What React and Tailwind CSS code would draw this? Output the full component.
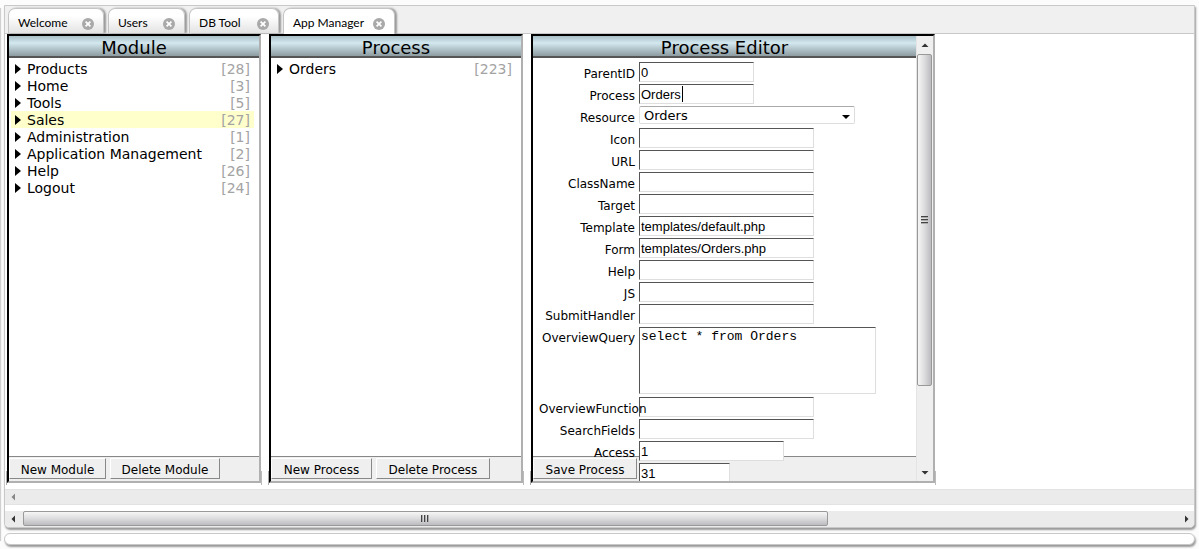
import React, { useState } from "react";

const tabs = [
  { name: "Welcome", width: "w-[96px]" },
  { name: "Users", width: "w-[77px]" },
  { name: "DB Tool", width: "w-[90px]" },
  { name: "App Manager", width: "w-[112px]" },
];

const modules = [
  ["Products", 28],
  ["Home", 3],
  ["Tools", 5],
  ["Sales", 27],
  ["Administration", 1],
  ["Application Management", 2],
  ["Help", 26],
  ["Logout", 24],
];

const textFields = [
  ["Icon", ""],
  ["URL", ""],
  ["ClassName", ""],
  ["Target", ""],
  ["Template", "templates/default.php"],
  ["Form", "templates/Orders.php"],
  ["Help", ""],
  ["JS", ""],
  ["SubmitHandler", ""],
];

const fieldStyle =
  "border border-t-[#555] border-l-[#555] border-r-[#dedede] border-b-[#dedede] bg-white outline-none font-['Liberation_Sans',sans-serif] text-[13px] text-black";

function CloseIcon() {
  return (
    <svg viewBox="0 0 12 12" className="size-3">
      <circle cx="6" cy="6" r="6" fill="#a9a9a9" />
      <path d="M3.6 3.6l4.8 4.8M8.4 3.6L3.6 8.4" stroke="#fff" strokeWidth="1.7" />
    </svg>
  );
}

function Tab({ name, width, selected, onSelect }) {
  return (
    <div
      className={`${width} flex items-start justify-between rounded-t-[7px] border border-b-0 border-[#c4c4c4] pr-[9px] pl-[9px] pt-1 shadow-[2px_0_2px_#999] ${
        selected ? "-mb-px bg-white" : "bg-linear-to-b from-white from-30% to-[#e3e3e3]"
      }`}
    >
      <button
        type="button"
        role="tab"
        aria-selected={selected}
        onClick={onSelect}
        className="font-[Lato,sans-serif] text-[12px] leading-5 whitespace-nowrap"
      >
        {name}
      </button>
      <button type="button" aria-label={`Close ${name}`} className="flex h-5 items-center pt-px">
        <CloseIcon />
      </button>
    </div>
  );
}

function Panel({ title, width, footer, scrollbar, children }) {
  return (
    <section className={`${width} relative flex shrink-0`}>
      <span className="absolute -bottom-[2px] -left-px h-[14px] w-px bg-[#aaa]" />
      <span className="absolute -right-px -bottom-[2px] h-[14px] w-px bg-[#bbb]" />
      <div className="flex min-w-0 flex-1 overflow-hidden border-2 border-t-black border-r-[#b0b0b0] border-b-[#b0b0b0] border-l-black bg-white">
        <div className="relative flex min-w-0 flex-1 flex-col">
          <h2 className="h-[22px] shrink-0 border-b-2 border-[#555] bg-linear-to-b from-[#a9bfc7] via-[#d3e8ef] via-35% to-[#8d9ca1] text-center text-[18px] leading-[24px]">
            {title}
          </h2>
          <div className="relative z-10 min-h-0 flex-1">{children}</div>
          <div className="absolute inset-x-0 bottom-0 flex h-[25px] gap-1 border-t border-[#888] bg-[#efefef] pt-px">
            {footer}
          </div>
        </div>
        {scrollbar}
      </div>
    </section>
  );
}

function FooterButton({ width, children }) {
  return (
    <button
      type="button"
      className={`${width} z-20 h-[21px] border border-t-white border-r-[#888] border-b-[#888] border-l-white bg-[#efefef] pt-[2px] text-[12px] leading-[19px] whitespace-nowrap`}
    >
      {children}
    </button>
  );
}

function TreeRow({ name, count, selected, onSelect }) {
  return (
    <li>
      <button
        type="button"
        onClick={onSelect}
        className={`flex h-[17px] w-full items-center pr-1 pl-1 text-left text-[14px] leading-[17px] ${
          selected ? "bg-[#ffffcc]" : ""
        }`}
      >
        <svg viewBox="0 0 6 10" className="mr-[6px] h-[10px] w-[6px]">
          <path d="M0 0L6 5L0 10Z" fill="#000" />
        </svg>
        <span className="flex-1 pt-[2px] whitespace-nowrap">{name}</span>
        <span className="pt-[2px] text-[#a3a3a3]">[{count}]</span>
      </button>
    </li>
  );
}

function FieldRow({ id, label, children }) {
  return (
    <div className="flex gap-1">
      <label
        htmlFor={id}
        className="relative z-10 h-[22px] w-24 shrink-0 text-right text-[12px] leading-[24px] whitespace-nowrap"
      >
        {label}
      </label>
      <div className="relative flex">{children}</div>
    </div>
  );
}

function TextRow({ label, value, width, ariaLabel, caret }) {
  const id = `field-${label || "extra"}`;
  return (
    <FieldRow id={id} label={label}>
      <input
        id={id}
        type="text"
        aria-label={ariaLabel}
        defaultValue={value}
        className={`${width} ${fieldStyle} mb-[2px] h-5 px-px`}
      />
      {caret && <span className="absolute top-[2px] left-[43px] h-4 w-px bg-black" />}
    </FieldRow>
  );
}

function Arrow({ direction, color = "#333" }) {
  const shapes = {
    left: "M7 4.5L3.5 8L7 11.5Z",
    right: "M8 4.5L11.5 8L8 11.5Z",
    up: "M4.5 10L8 6.5L11.5 10Z",
    down: "M4.5 6L8 9.5L11.5 6Z",
  };
  return (
    <svg viewBox="0 0 16 16" className="size-4">
      <path d={shapes[direction]} fill={color} />
    </svg>
  );
}

function VerticalScrollbar() {
  return (
    <div className="flex w-[17px] shrink-0 flex-col items-stretch border-l border-[#e4e4e4] bg-[#efefef]">
      <button type="button" aria-label="Scroll up" className="h-[18px]">
        <Arrow direction="up" />
      </button>
      <div className="mr-px flex flex-[332] flex-col items-center justify-center gap-px rounded-[2px] border border-[#999] bg-linear-to-r from-[#f6f6f6] via-[#dcdcde] to-[#bcbcc0]">
        <span className="h-[2px] w-[7px] border-b border-[#aaa] bg-[#444]" />
        <span className="h-[2px] w-[7px] border-b border-[#aaa] bg-[#444]" />
        <span className="h-[2px] w-[7px] border-b border-[#aaa] bg-[#444]" />
      </div>
      <div className="flex-[78]" />
      <button type="button" aria-label="Scroll down" className="h-[17px]">
        <Arrow direction="down" />
      </button>
    </div>
  );
}

function EditorForm() {
  return (
    <form className="px-[6px] pt-1">
      <TextRow label="ParentID" value="0" width="w-[115px]" />
      <TextRow label="Process" value="Orders" width="w-[115px]" caret />
      <FieldRow id="resource" label="Resource">
        <select
          id="resource"
          defaultValue="Orders"
          className="h-[18px] w-[216px] appearance-none rounded-[2px] border border-t-[#aaa] border-r-[#ddd] border-b-[#ddd] border-l-[#ddd] bg-white pt-px pl-1 text-[13px] leading-4 outline-none"
        >
          <option>Orders</option>
        </select>
        <svg viewBox="0 0 8 4" className="pointer-events-none absolute top-[9px] right-[5px] h-1 w-2">
          <path d="M0 0H8L4 4Z" fill="#000" />
        </svg>
      </FieldRow>
      {textFields.map(([label, value]) => (
        <TextRow key={label} label={label} value={value} width="w-[175px]" />
      ))}
      <FieldRow id="overview-query" label="OverviewQuery">
        <textarea
          id="overview-query"
          defaultValue="select * from Orders"
          className="mt-px mb-[3px] h-[67px] w-[237px] resize-none border border-t-[#555] border-r-[#dedede] border-b-[#dedede] border-l-[#555] bg-white px-px py-px font-['Liberation_Mono',monospace] text-[13px] leading-4 outline-none"
        />
      </FieldRow>
      <TextRow label="OverviewFunction" value="" width="w-[175px]" />
      <TextRow label="SearchFields" value="" width="w-[175px]" />
      <TextRow label="Access" value="1" width="w-[145px]" />
      <TextRow label="" value="31" width="w-[91px]" ariaLabel="Order" />
    </form>
  );
}

export default function App() {
  const [tab, setTab] = useState("App Manager");
  const [module, setModule] = useState("Sales");
  return (
    <div className="flex h-screen gap-[3px] overflow-hidden bg-[#fcfcfc] pr-1 font-['DejaVu_Sans',Verdana,sans-serif] text-black">
      <div className="my-2 w-px rounded-full bg-[#d0d0d0] shadow-[0_0_1px_#bbb]" />
      <div className="flex min-w-0 flex-1 flex-col gap-[5px] pt-[5px] pb-1">
        <main className="flex min-h-0 flex-1 flex-col rounded-b-[5px] border border-[#c8c8c8] bg-white shadow-[1px_2px_2px_#999]">
          <div role="tablist" className="flex h-7 gap-1 border-b border-[#c8c8c8] bg-[#f0f0f0] pt-[2px] pl-[3px]">
            {tabs.map((t) => (
              <Tab key={t.name} {...t} selected={tab === t.name} onSelect={() => setTab(t.name)} />
            ))}
          </div>
          <div className="flex min-h-0 flex-1 gap-2 pl-[2px]">
            <Panel
              title="Module"
              width="w-[254px]"
              footer={
                <>
                  <FooterButton width="w-[97px]">New Module</FooterButton>
                  <FooterButton width="w-[110px]">Delete Module</FooterButton>
                </>
              }
            >
              <ul className="pt-[2px] pr-[5px] pl-[2px]">
                {modules.map(([name, count]) => (
                  <TreeRow
                    key={name}
                    name={name}
                    count={count}
                    selected={name === module}
                    onSelect={() => setModule(name)}
                  />
                ))}
              </ul>
            </Panel>
            <Panel
              title="Process"
              width="w-[254px]"
              footer={
                <>
                  <FooterButton width="w-[101px]">New Process</FooterButton>
                  <FooterButton width="w-[114px]">Delete Process</FooterButton>
                </>
              }
            >
              <ul className="pt-[2px] pr-[5px] pl-[2px]">
                <TreeRow name="Orders" count={223} />
              </ul>
            </Panel>
            <Panel
              title="Process Editor"
              width="w-[404px]"
              footer={<FooterButton width="w-[104px]">Save Process</FooterButton>}
              scrollbar={<VerticalScrollbar />}
            >
              <EditorForm />
            </Panel>
          </div>
          <div className="mt-[6px] flex h-4 border-y border-[#e2e2e2] bg-[#ebebeb]">
            <button type="button" disabled aria-label="Scroll panels left" className="flex h-full items-center pl-[3px]">
              <Arrow direction="left" color="#888" />
            </button>
          </div>
          <div className="mt-[6px] flex h-4 rounded-b-[4px] bg-[#ebebeb]">
            <button type="button" aria-label="Scroll left" className="w-[18px] pl-[3px]">
              <Arrow direction="left" />
            </button>
            <div className="mb-px flex flex-[804] items-center justify-center gap-px rounded-[2px] border border-[#999] bg-linear-to-b from-[#f6f6f6] via-[#dcdcde] to-[#bcbcc0]">
              <span className="h-[7px] w-[2px] border-r border-[#aaa] bg-[#444]" />
              <span className="h-[7px] w-[2px] border-r border-[#aaa] bg-[#444]" />
              <span className="h-[7px] w-[2px] border-r border-[#aaa] bg-[#444]" />
            </div>
            <div className="flex-[350]" />
            <button type="button" aria-label="Scroll right" className="w-[17px]">
              <Arrow direction="right" />
            </button>
          </div>
        </main>
        <footer className="h-3 rounded-full border border-[#c8c8c8] bg-white shadow-[1px_2px_2px_#999]" />
      </div>
    </div>
  );
}
